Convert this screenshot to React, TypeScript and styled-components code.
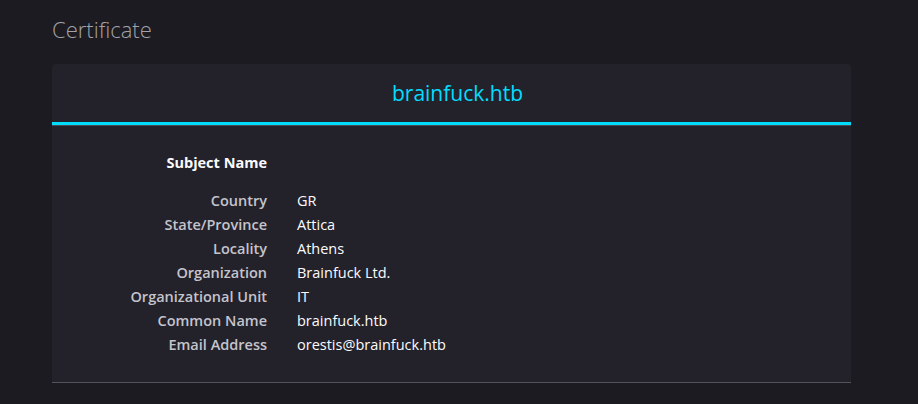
import React from "react";
import styled, { createGlobalStyle } from "styled-components";

const Global = createGlobalStyle`
  html, body { margin: 0; padding: 0; background: #1c1b22; }
  body { font-family: "Open Sans", "Noto Sans", sans-serif; }
`;

const Page = styled.main`
  padding: 14px 52px 0 52px;
  width: 918px;
  height: 404px;
  box-sizing: border-box;
  overflow: hidden;
  background: #1c1b22;
`;

const Heading = styled.h1`
  margin: 0 0 20px 0;
  font-size: 22px;
  font-weight: 300;
  line-height: 30px;
  color: #a3a2aa;
`;

const Card = styled.section`
  width: 799px;
  background: #23222b;
  border-radius: 4px 4px 0 0;
  overflow: hidden;
`;

const Tabs = styled.div`
  display: flex;
  justify-content: center;
  border-bottom: 1px solid #4a4952;
`;

const Tab = styled.div<{ $active?: boolean }>`
  height: 58px;
  padding: 0 12px 0 24px;
  display: flex;
  align-items: center;
  font-size: 21px;
  color: #00ddff;
  border-bottom: 3px solid ${(p) => (p.$active ? "#00ddff" : "transparent")};
  flex: 1;
  justify-content: center;
`;

const Body = styled.div`
  padding: 25px 0 25px 0;
  border-bottom: 1px solid #55545c;
`;

const Grid = styled.div`
  display: grid;
  grid-template-columns: 215px 1fr;
  column-gap: 30px;
  font-size: 14.5px;
  line-height: 24px;
`;

const SectionTitle = styled.div`
  grid-column: 1;
  text-align: right;
  font-weight: 700;
  color: #fbfbfe;
  margin-bottom: 14px;
`;

const Label = styled.div`
  text-align: right;
  font-weight: 600;
  color: #c5c4cc;
`;

const Value = styled.div`
  color: #fbfbfe;
`;

const rows: [string, string][] = [
  ["Country", "GR"],
  ["State/Province", "Attica"],
  ["Locality", "Athens"],
  ["Organization", "Brainfuck Ltd."],
  ["Organizational Unit", "IT"],
  ["Common Name", "brainfuck.htb"],
  ["Email Address", "orestis@brainfuck.htb"],
];

export default function App() {
  return (
    <>
      <Global />
      <Page>
        <Heading>Certificate</Heading>
        <Card>
          <Tabs>
            <Tab $active>brainfuck.htb</Tab>
          </Tabs>
          <Body>
            <Grid>
              <SectionTitle>Subject Name</SectionTitle>
              <div />
              {rows.map(([k, v]) => (
                <React.Fragment key={k}>
                  <Label>{k}</Label>
                  <Value>{v}</Value>
                </React.Fragment>
              ))}
            </Grid>
          </Body>
        </Card>
      </Page>
    </>
  );
}
